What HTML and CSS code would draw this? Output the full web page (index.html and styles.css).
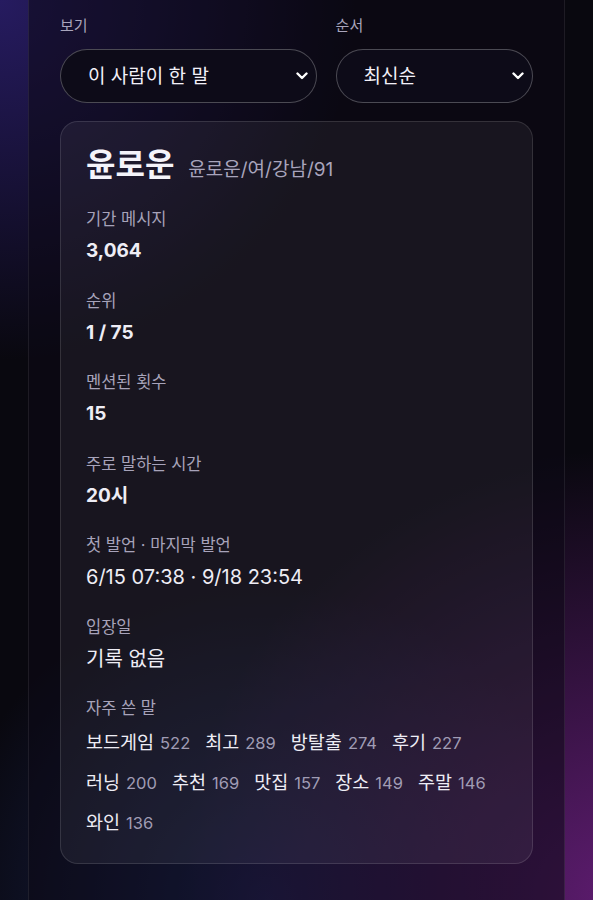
FILE: index.html
```html
<!DOCTYPE html>
<html lang="ko">
<head>
    <meta charset="UTF-8">
    <meta name="viewport" content="width=device-width, initial-scale=1">
    <title>사람 보기</title>
    <link rel="stylesheet" href="styles.css">
</head>
<body>

<div class="panel">

    <div class="controls">
        <div class="field">
            <label for="viewSelect">보기</label>
            <div class="selectBox">
                <select id="viewSelect">
                    <option>이 사람이 한 말</option>
                    <option>이 사람을 멘션한 말</option>
                </select>
                <svg class="chevron" width="12" height="8" viewBox="0 0 12 8"><path d="M1.5 1.5 L6 6 L10.5 1.5" fill="none" stroke="#fff" stroke-width="2.4" stroke-linecap="round" stroke-linejoin="round"/></svg>
            </div>
        </div>
        <div class="field">
            <label for="orderSelect">순서</label>
            <div class="selectBox">
                <select id="orderSelect">
                    <option>최신순</option>
                    <option>오래된순</option>
                </select>
                <svg class="chevron" width="12" height="8" viewBox="0 0 12 8"><path d="M1.5 1.5 L6 6 L10.5 1.5" fill="none" stroke="#fff" stroke-width="2.4" stroke-linecap="round" stroke-linejoin="round"/></svg>
            </div>
        </div>
    </div>

    <div class="card">
        <div class="nameRow">
            <span class="name">윤로운</span>
            <span class="nick">윤로운/여/강남/91</span>
        </div>

        <div class="stat">
            <div class="statLabel">기간 메시지</div>
            <div class="statValue bold">3,064</div>
        </div>
        <div class="stat">
            <div class="statLabel">순위</div>
            <div class="statValue bold">1 / 75</div>
        </div>
        <div class="stat">
            <div class="statLabel">멘션된 횟수</div>
            <div class="statValue bold">15</div>
        </div>
        <div class="stat">
            <div class="statLabel">주로 말하는 시간</div>
            <div class="statValue bold">20시</div>
        </div>
        <div class="stat">
            <div class="statLabel">첫 발언 · 마지막 발언</div>
            <div class="statValue">6/15 07:38 · 9/18 23:54</div>
        </div>
        <div class="stat">
            <div class="statLabel">입장일</div>
            <div class="statValue">기록 없음</div>
        </div>
        <div class="stat">
            <div class="statLabel">자주 쓴 말</div>
            <div class="tags">
                <span class="tag">보드게임<span class="count">522</span></span>
                <span class="tag">최고<span class="count">289</span></span>
                <span class="tag">방탈출<span class="count">274</span></span>
                <span class="tag">후기<span class="count">227</span></span>
                <span class="tag">러닝<span class="count">200</span></span>
                <span class="tag">추천<span class="count">169</span></span>
                <span class="tag">맛집<span class="count">157</span></span>
                <span class="tag">장소<span class="count">149</span></span>
                <span class="tag">주말<span class="count">146</span></span>
                <span class="tag">와인<span class="count">136</span></span>
            </div>
        </div>
    </div>

</div>

</body>
</html>
```

FILE: styles.css
```css
html, body {
    margin: 0;
    height: 100%;
}

body {
    font-family: "Inter", "Noto Sans CJK KR", sans-serif;
    color: #eeedf5;
    background:
        radial-gradient(ellipse 75% 50% at 105% 100%, #5e1c70 0%, rgba(94, 28, 112, 0) 100%),
        radial-gradient(ellipse 60% 40% at 0% 0%, #261b60 0%, rgba(38, 27, 96, 0) 100%),
        radial-gradient(ellipse 55% 35% at 45% 100%, #1a2656 0%, rgba(26, 38, 86, 0) 100%),
        #09080f;
    overflow: hidden;
}

.panel {
    margin: 0 28px;
    min-height: 900px;
    padding: 16px 31px 0;
    border-left: 1px solid rgba(255, 255, 255, 0.08);
    border-right: 1px solid rgba(255, 255, 255, 0.08);
    background: rgba(12, 10, 22, 0.55);
}

/* selects */
.controls {
    display: grid;
    grid-template-columns: 13fr 10fr;
    gap: 19px;
}

.field label {
    display: block;
    font-size: 15px;
    line-height: 20px;
    color: #a9a5bc;
    margin-bottom: 13px;
}

.selectBox {
    position: relative;
}

.selectBox select {
    -webkit-appearance: none;
    appearance: none;
    width: 100%;
    height: 54px;
    padding: 0 27px;
    border: 1.5px solid rgba(255, 255, 255, 0.26);
    border-radius: 27px;
    background: #0d0b18;
    color: #f2f0f8;
    font-family: "Inter", "Noto Sans CJK KR", sans-serif;
    font-size: 19px;
    outline: none;
}

.chevron {
    position: absolute;
    right: 9px;
    top: 23px;
    pointer-events: none;
}

/* card */
.card {
    margin-top: 18px;
    padding: 24px 25px 27px;
    border: 1px solid rgba(255, 255, 255, 0.12);
    border-radius: 18px;
    background: rgba(255, 255, 255, 0.055);
}

.nameRow {
    display: flex;
    align-items: baseline;
    line-height: 38px;
}

.name {
    font-size: 32px;
    font-weight: 700;
    color: #f4f3fa;
}

.nick {
    margin-left: 14px;
    font-size: 19px;
    color: #a8a4bc;
}

.stat {
    margin-top: 25.5px;
}

.nameRow + .stat {
    margin-top: 19px;
}

.statLabel {
    font-size: 16.5px;
    line-height: 22px;
    color: #a7a3ba;
}

.statValue {
    margin-top: 8px;
    font-size: 20px;
    line-height: 26px;
    color: #eeedf5;
}

.statValue.bold {
    font-size: 19px;
    font-weight: 700;
}

.tags {
    display: flex;
    flex-wrap: wrap;
    column-gap: 15px;
    row-gap: 13px;
    margin-top: 10px;
    line-height: 26px;
}

.tag {
    font-size: 18.5px;
    font-weight: 400;
    color: #eeedf5;
    white-space: nowrap;
}

.count {
    margin-left: 6px;
    font-size: 16.5px;
    color: #a09cb4;
}
```
